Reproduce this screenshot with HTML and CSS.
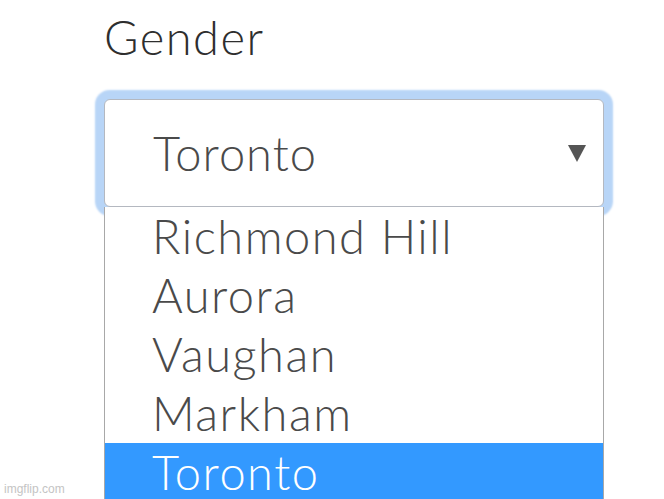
FILE: index.html
```html
<!DOCTYPE html>
<html lang="en">
<head>
    <meta charset="UTF-8">
    <meta name="viewport" content="width=device-width, initial-scale=1.0">
    <title>Gender</title>
    <link rel="stylesheet" href="styles.css">
</head>
<body>
    <div class="form-group">
        <label class="form-label">Gender</label>
        <div class="select-box">
            <span class="select-value">Toronto</span>
            <svg class="select-arrow" width="18" height="17" viewBox="0 0 18 17">
                <polygon points="0,0 18,0 9,17" fill="#555"></polygon>
            </svg>
        </div>
        <ul class="options">
            <li class="option">Richmond Hill</li>
            <li class="option">Aurora</li>
            <li class="option">Vaughan</li>
            <li class="option">Markham</li>
            <li class="option option-selected">Toronto</li>
        </ul>
    </div>
    <div class="watermark">imgflip.com</div>
</body>
</html>
```

FILE: styles.css
```css
html, body {
    height: 100%;
}

body {
    margin: 0;
    background-color: #fff;
    font-family: Lato, "Open Sans", sans-serif;
    font-weight: 300;
    overflow: hidden;
}

.form-group {
    padding: 9px 0 0 104px;
    width: 500px;
}

.form-label {
    display: block;
    font-size: 47px;
    line-height: 57px;
    letter-spacing: 1.5px;
    color: #2e2e2e;
    margin-bottom: 33px;
}

.select-box {
    box-sizing: border-box;
    height: 108px;
    display: flex;
    align-items: center;
    justify-content: space-between;
    padding: 0 17px 0 48px;
    border: 1px solid #b4b8c0;
    border-radius: 6px;
    background-color: #fff;
    box-shadow: 0 0 2px 9px #b8d5f7;
}

.select-value {
    font-size: 47px;
    letter-spacing: 1px;
    color: #4a4a4a;
}

.select-arrow {
    display: block;
    margin-top: 1px;
}

.options {
    position: relative;
    z-index: 1;
    list-style: none;
    margin: 0;
    padding: 0;
    border: 1px solid #a8a8a8;
    border-top: none;
    background-color: #fff;
}

.option {
    padding-left: 47px;
    font-size: 47px;
    line-height: 59px;
    letter-spacing: 1.5px;
    color: #4a4a4a;
}

.option-selected {
    background-color: #3399ff;
    color: #fff;
}

.watermark {
    position: absolute;
    left: 4px;
    bottom: 3px;
    font-family: "Liberation Sans", Arial, sans-serif;
    font-weight: 400;
    font-size: 12px;
    color: #c4c4c4;
}
```
